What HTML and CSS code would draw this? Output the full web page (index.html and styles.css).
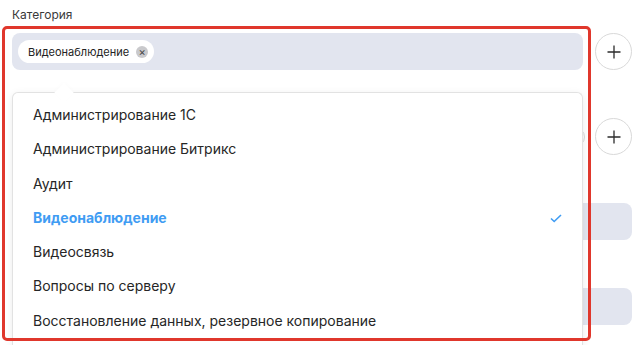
FILE: index.html
```html
<!DOCTYPE html>
<html lang="ru">
<head>
  <meta charset="UTF-8">
  <meta name="viewport" content="width=device-width, initial-scale=1.0">
  <title>Категория</title>
  <link rel="stylesheet" href="styles.css">
</head>
<body>

  <div class="form">
    <!-- Category -->
    <div class="field">
      <div class="label">Категория</div>
      <div class="field-row">
        <div class="select">
          <span class="chip">Видеонаблюдение <span class="chip-close">&times;</span></span>
        </div>
        <button type="button" class="add-btn">
          <svg width="14" height="14" viewBox="0 0 14 14"><path d="M7 0.5v13M0.5 7h13" stroke="#2b2b2b" stroke-width="1.3"/></svg>
        </button>
      </div>
    </div>

    <!-- fields under the open list -->
    <div class="field">
      <div class="label"></div>
      <div class="field-row">
        <div class="select select-white"><span class="round"></span></div>
        <button type="button" class="add-btn">
          <svg width="14" height="14" viewBox="0 0 14 14"><path d="M7 0.5v13M0.5 7h13" stroke="#2b2b2b" stroke-width="1.3"/></svg>
        </button>
      </div>
    </div>

    <div class="field">
      <div class="label"></div>
      <div class="select"></div>
    </div>

    <div class="field">
      <div class="label"></div>
      <div class="select"></div>
    </div>

    <!-- Dropdown list -->
    <div class="dropdown">
      <span class="dropdown-arrow"></span>
      <ul class="options">
        <li>Администрирование 1С</li>
        <li>Администрирование Битрикс</li>
        <li>Аудит</li>
        <li class="selected">Видеонаблюдение
          <svg class="check" width="12" height="9" viewBox="0 0 12 9"><path d="M1 4.5l3.2 3L11 1" fill="none" stroke="#3f9cf3" stroke-width="1.6"/></svg>
        </li>
        <li>Видеосвязь</li>
        <li>Вопросы по серверу</li>
        <li>Восстановление данных, резервное копирование</li>
      </ul>
    </div>

    <!-- highlight frame -->
    <div class="highlight"></div>
  </div>

</body>
</html>
```

FILE: styles.css
```css
body {
  margin: 0;
  font-family: Inter, "Noto Sans", sans-serif;
  color: #262626;
  background: #fff;
  overflow: hidden;
  height: 345px;
}
.form {
  position: relative;
  height: 345px;
  padding: 7px 6px 0 12px;
  box-sizing: border-box;
}
.field {
  margin-bottom: 22px;
}
.field:last-of-type {
  margin-bottom: 0;
}
.label {
  font-size: 12px;
  line-height: 16px;
  height: 16px;
  color: #3a3a3a;
  margin-bottom: 10px;
}
.field-row {
  display: flex;
  align-items: center;
  gap: 12px;
}
.select {
  flex: 1;
  height: 37px;
  background-color: #e2e5ef;
  border-radius: 8px;
  display: flex;
  align-items: center;
  padding: 0 6px;
  box-sizing: border-box;
}
.select-white {
  background-color: #fff;
  justify-content: flex-end;
  padding: 0;
}
.round {
  width: 18px;
  height: 18px;
  margin-right: -2px;
  border: 1px solid #d8d8d8;
  border-radius: 50%;
}
.chip {
  display: inline-flex;
  align-items: center;
  gap: 7px;
  height: 23px;
  padding: 0 6px 0 10px;
  background: #fff;
  border-radius: 12px;
  font-size: 11px;
  color: #222;
}
.chip-close {
  width: 12px;
  height: 12px;
  border-radius: 50%;
  background: #c9c9cc;
  color: #444;
  font-size: 11px;
  line-height: 12px;
  text-align: center;
}
.add-btn {
  width: 37px;
  height: 37px;
  flex: none;
  border: 1px solid #d9d9d9;
  border-radius: 50%;
  background: #fff;
  display: flex;
  align-items: center;
  justify-content: center;
  padding: 0;
}
.dropdown {
  position: absolute;
  left: 12px;
  top: 92px;
  width: 571px;
  height: 253px;
  background: #fff;
  border: 1px solid #e2e2e2;
  border-bottom: none;
  border-radius: 6px 6px 0 0;
  box-shadow: 0 2px 8px rgba(0, 0, 0, 0.08);
  box-sizing: border-box;
}
.dropdown-arrow {
  position: absolute;
  left: 44px;
  top: -7px;
  width: 14px;
  height: 14px;
  background: #fff;
  transform: rotate(45deg);
  box-shadow: -1px -1px 5px rgba(0, 0, 0, 0.015);
}
.options {
  position: relative;
  list-style: none;
  margin: 0;
  padding: 5px 0 0;
}
.options li {
  height: 34.3px;
  line-height: 34.3px;
  padding: 0 20px;
  font-size: 14px;
  color: #262626;
  display: flex;
  align-items: center;
  justify-content: space-between;
}
.options li.selected {
  color: #3f9cf3;
  font-weight: 700;
}
.highlight {
  position: absolute;
  left: 2px;
  top: 26px;
  width: 589px;
  height: 315px;
  border: 3px solid #e0372c;
  border-radius: 5px;
  box-sizing: border-box;
  pointer-events: none;
}
```
